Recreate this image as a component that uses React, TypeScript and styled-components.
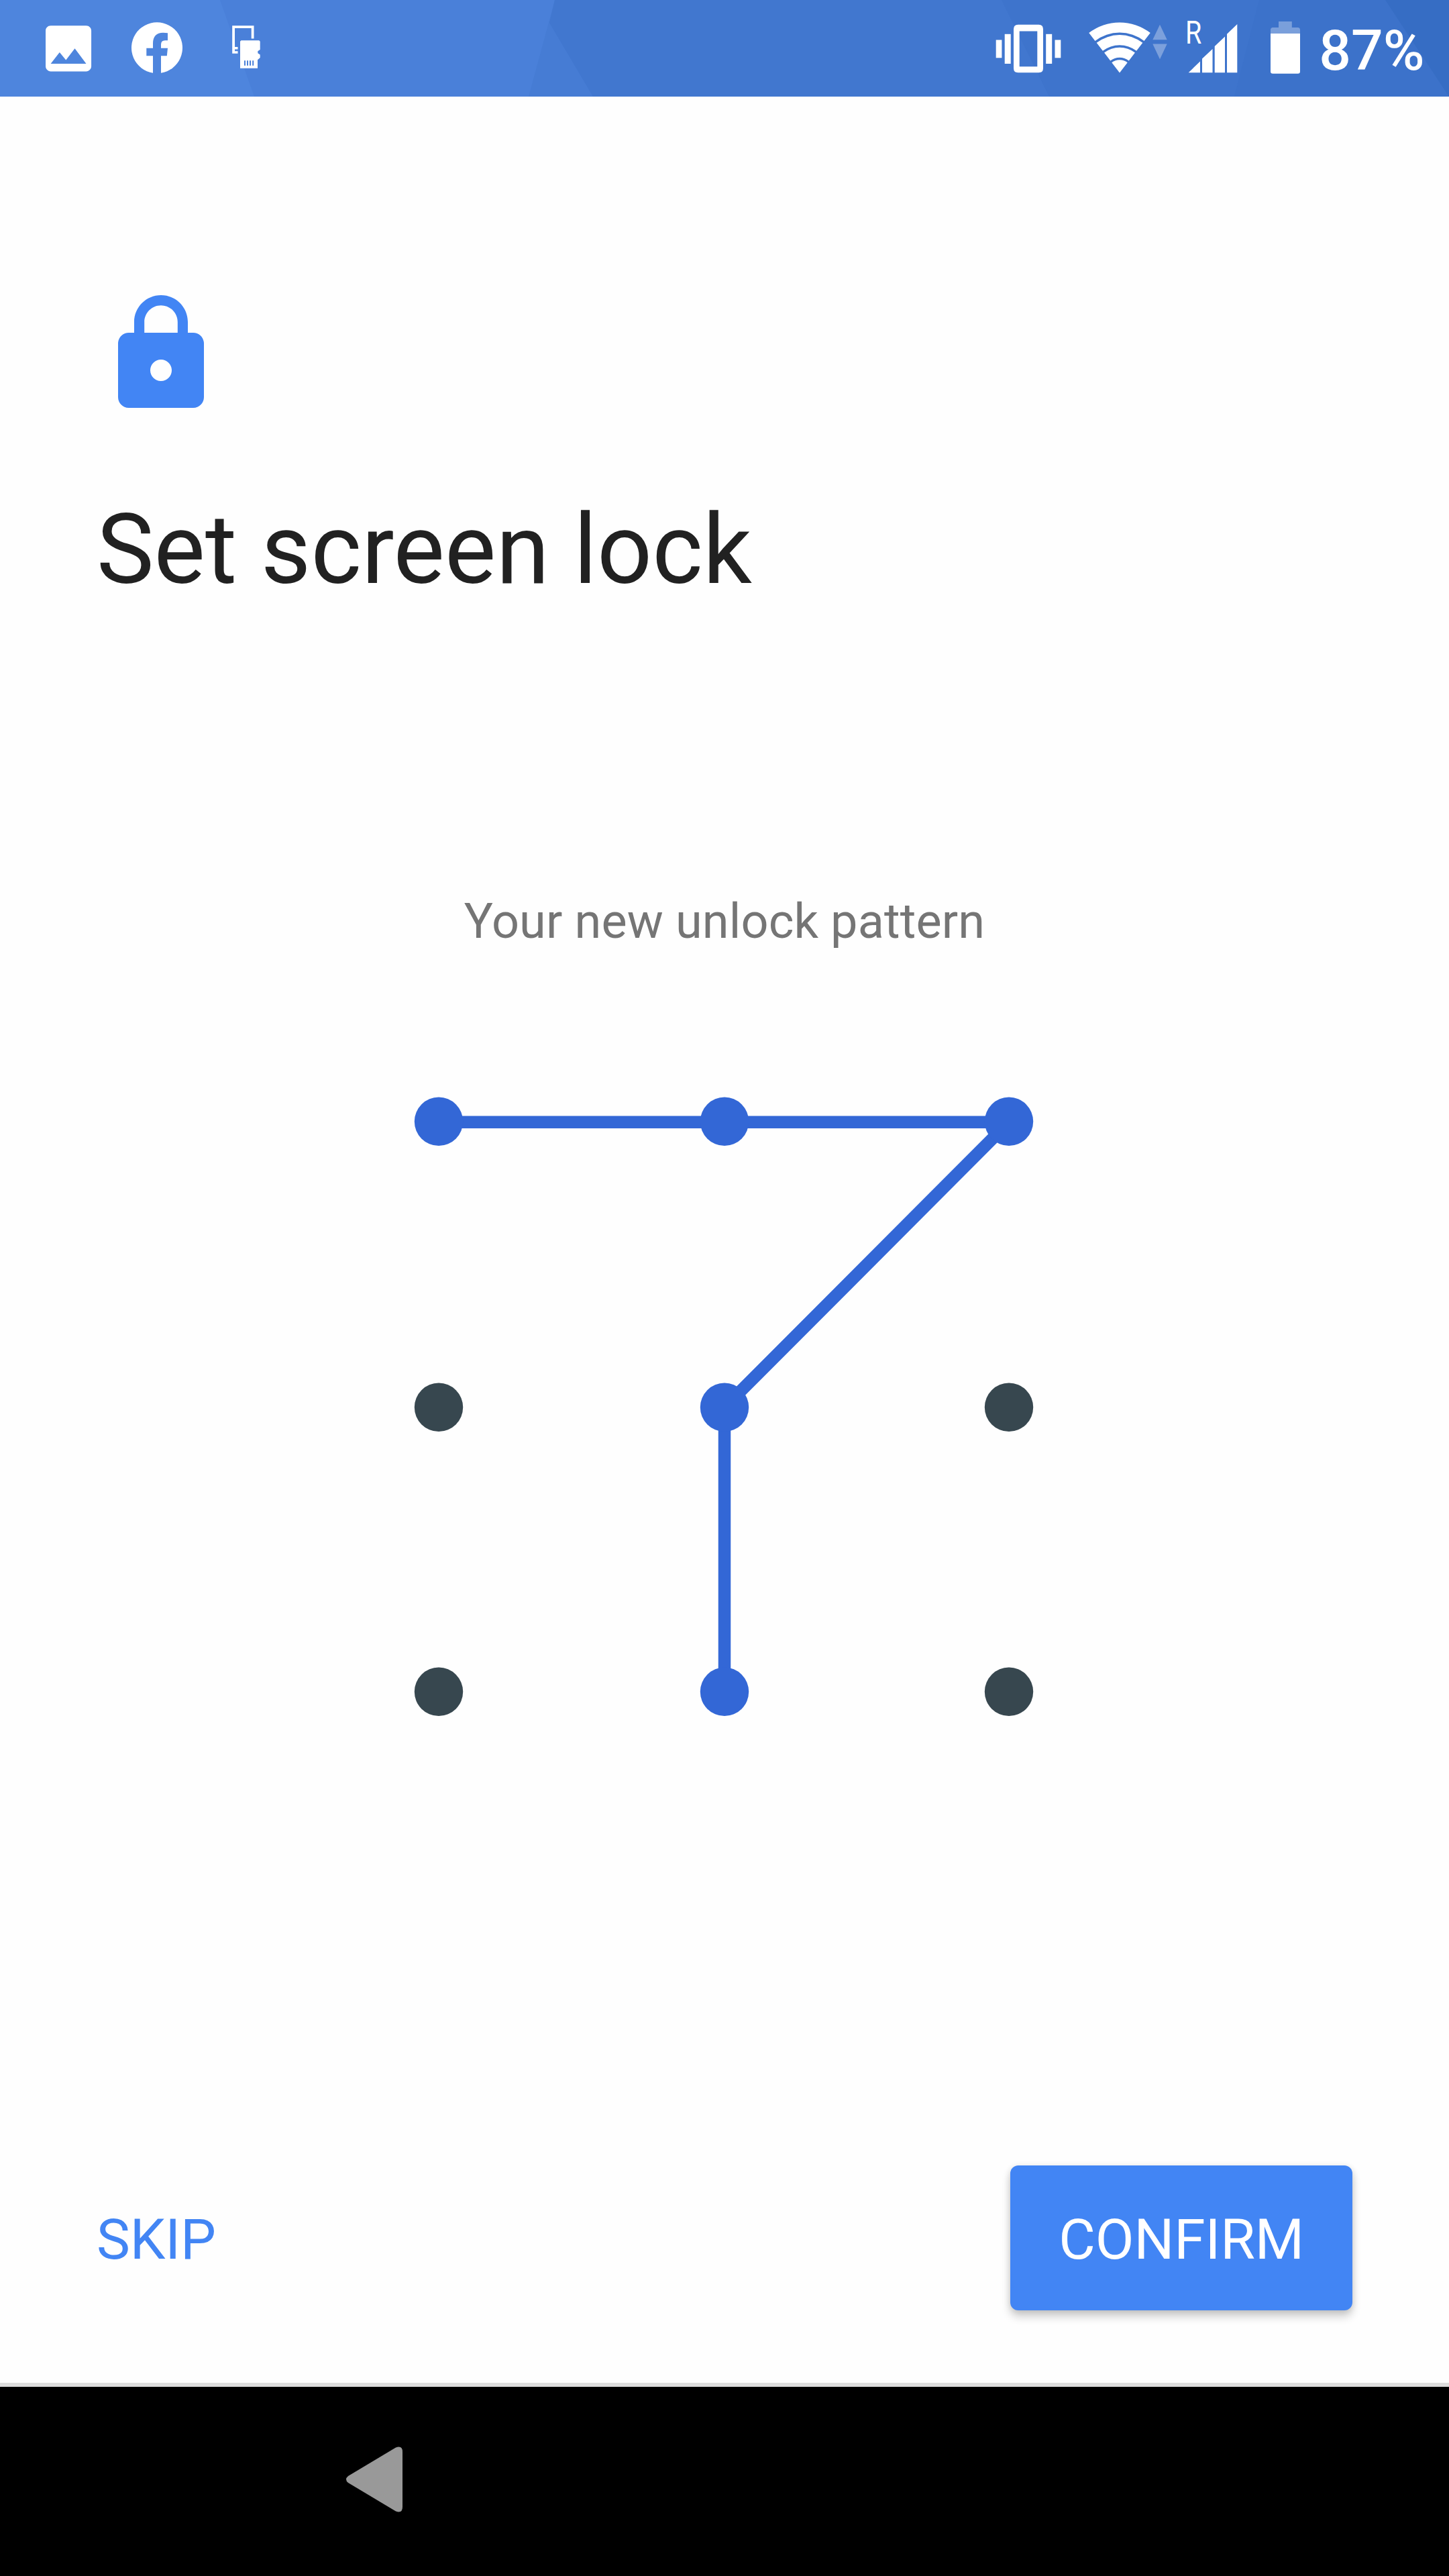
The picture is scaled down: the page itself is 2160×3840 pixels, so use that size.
import React from 'react';
import styled, { createGlobalStyle } from 'styled-components';

const GlobalStyle = createGlobalStyle`
  body { margin: 0; background: #fefefe; }
  *, *::before, *::after { box-sizing: border-box; }
`;

const Screen = styled.div`
  display: flex;
  flex-direction: column;
  width: 2160px;
  height: 3840px;
  background: #fefefe;
  font-family: Roboto, 'Noto Sans', sans-serif;
  overflow: hidden;
`;

const StatusBar = styled.header`
  position: relative;
  flex: none;
  display: flex;
  justify-content: space-between;
  height: 144px;
  padding: 0 36.500px 0 56px;
  color: #fff;
`;

const Backdrop = styled.svg`
  position: absolute;
  inset: 0;
  width: 2160px;
  height: 144px;
`;

const StatusGroup = styled.div`
  position: relative;
  display: flex;
  align-items: flex-start;
`;

const Glyph = styled.svg<{ $gap?: number }>`
  flex: none;
  display: block;
  height: 144px;
  margin-left: ${({ $gap = 0 }) => $gap}px;
  fill: #fff;
`;

const Roaming = styled.span`
  width: 22px;
  margin: 21px -20px 0 26px;
  font-size: 48px;
  line-height: 56px;
  transform: scaleX(0.82);
  transform-origin: left center;
`;

const BatteryLevel = styled.span`
  margin: 27px 0 0 28px;
  font-size: 84px;
  font-weight: 500;
  line-height: 98px;
  white-space: nowrap;
`;

const Main = styled.main`
  flex: 1;
  display: flex;
  flex-direction: column;
  padding: 288px 144px 108px;
`;

const LockIcon = styled.svg`
  flex: none;
  width: 192px;
  height: 192px;
  fill: #4285f4;
`;

const Title = styled.h1`
  margin: 112px 0 0;
  font-size: 144px;
  font-weight: 400;
  line-height: 168px;
  letter-spacing: 0.1px;
  color: #212121;
`;

const Hint = styled.p`
  margin: 428px 0 0;
  font-size: 72px;
  line-height: 84px;
  letter-spacing: 0.15px;
  text-align: center;
  color: #757575;
`;

const Pattern = styled.svg`
  flex: none;
  align-self: center;
  width: 936px;
  height: 936px;
  margin-top: 214px;
`;

const Actions = styled.footer`
  display: flex;
  justify-content: space-between;
  align-items: center;
  height: 216px;
  margin-top: auto;
`;

const Button = styled.button<{ $raised?: boolean }>`
  height: 216px;
  padding: ${({ $raised }) => ($raised ? '6px 72px 0' : '6px 0 0')};
  border: 0;
  border-radius: 12px;
  background: ${({ $raised }) => ($raised ? '#4285f4' : 'transparent')};
  box-shadow: ${({ $raised }) =>
    $raised ? '0 9px 14px rgba(0,0,0,.2), 0 1px 10px rgba(0,0,0,.1)' : 'none'};
  color: ${({ $raised }) => ($raised ? '#fff' : '#4285f4')};
  font: 400 84px/98px Roboto, 'Noto Sans', sans-serif;
  letter-spacing: -0.15px;
`;

const NavBar = styled.nav`
  flex: none;
  display: flex;
  align-items: center;
  height: 288px;
  padding-left: 516px;
  border-top: 6px solid #ddd;
  background: #000;
  svg { margin-top: -7px; }
`;

type GlyphProps = { x: number; w: number; gap?: number; children: React.ReactNode };

const StatusGlyph = ({ x, w, gap, children }: GlyphProps) => (
  <Glyph $gap={gap} width={w} viewBox={`${x} 0 ${w} 144`}>
    {children}
  </Glyph>
);

/* Ring section of the Wi-Fi fan, its apex at (1669, 108.4). */
const wifiBand = (outer: number, inner: number) => {
  const ux = 0.61;
  const uy = 0.792;
  const px = (r: number, s: number) => `${(1669 + s * ux * r).toFixed(2)} ${(108.4 - uy * r).toFixed(2)}`;
  return `M${px(outer, -1)}A${outer} ${outer} 0 0 1 ${px(outer, 1)}L${px(inner, 1)}${
    inner ? `A${inner} ${inner} 0 0 0 ${px(inner, -1)}` : ''
  }Z`;
};

const columns = [42, 468, 892];
const rows = [41.8, 467.8, 891.8];
const picked = [0, 1, 2, 4, 7];

const PatternGrid = () => (
  <Pattern viewBox="0 0 936 936">
    <path d="M42 42.7H892L468 467.8V891.8" fill="none" stroke="#3367d6" strokeWidth="18.5" strokeLinejoin="round" />
    {rows.flatMap((cy, r) =>
      columns.map((cx, c) => {
        const index = r * 3 + c;
        return <circle key={index} cx={cx} cy={cy} r="36.200" fill={picked.includes(index) ? '#3367d6' : '#37474f'} />;
      }),
    )}
  </Pattern>
);

export default function App() {
  return (
    <Screen>
      <GlobalStyle />
      <StatusBar>
        <Backdrop viewBox="0 0 2160 144">
          <path d="M0 0H2160V144H0Z" fill="#4e85dd" />
          <path d="M328 0H2160V144H379Z" fill="#4a80d9" />
          <path d="M827 0H2160V144H788Z" fill="#467cd4" />
          <path d="M827 0H2160V144H884L819 34Z" fill="#4177cf" />
          <path d="M1493 0H2160V144H1564Z" fill="#3e74cc" />
          <path d="M1877 0H2160V144H1840Z" fill="#3c72ca" />
          <path d="M2065 0H2160V144Z" fill="#366dc4" />
        </Backdrop>
        <StatusGroup>
          <StatusGlyph x={56} w={92}>
            <path
              transform="translate(56.7 27) scale(3.78)"
              d="M21 19V5c0-1.1-.9-2-2-2H5c-1.1 0-2 .9-2 2v14c0 1.1.9 2 2 2h14c1.1 0 2-.9 2-2zM8.5 13.5l2.5 3.01L14.5 12l4.5 6H5l3.5-4.5z"
            />
          </StatusGlyph>
          <StatusGlyph x={196} w={76} gap={48}>
            <path d="M228 108.8A38 38 0 1 1 240 108.8V83.3H248.8L250 71.7H240V66.5Q240 60.2 246 60.2H250V49.3Q247 48.8 243 48.8C233.500 48.8 228 54.500 228 64.500V71.7H218.300V83.3H228Z" />
          </StatusGlyph>
          <StatusGlyph x={346} w={42} gap={74}>
            <path d="M346.200 38.200H378.500V57.500H374.700V42H350V70H354.500V73.500H350V76.300H354.500V79.800H346.200Z" />
            <path
              fillRule="evenodd"
              d="M359.500 60.300H386.200L387.700 61.800V74L384.300 76.200V79.200L387.700 81.500V86L384 89.300V101.800H358V61.800ZM364 90.300V97.800H366V90.300ZM368 90.300V97.800H370V90.300ZM372 90.300V97.800H374V90.300ZM376.200 90.300V97.800H378.200V90.300Z"
            />
          </StatusGlyph>
        </StatusGroup>
        <StatusGroup>
          <StatusGlyph x={1484} w={98}>
            <rect x="1484.700" y="59.500" width="8.700" height="26.800" />
            <rect x="1497.700" y="50.800" width="9" height="44.200" />
            <rect x="1559.200" y="50.800" width="9" height="44.200" />
            <rect x="1572.500" y="59.500" width="8.800" height="26.800" />
            <path
              fillRule="evenodd"
              d="M1517.500 36.800H1548.500Q1555 36.800 1555 43.300V101.700Q1555 108.200 1548.500 108.200H1517.500Q1511 108.200 1511 101.700V43.300Q1511 36.800 1517.500 36.800ZM1519.700 46.500V99.200H1546.300V46.500Z"
            />
          </StatusGlyph>
          <StatusGlyph x={1623} w={118} gap={41}>
            <path d={wifiBand(75, 59.9)} />
            <path d={wifiBand(56.3, 41.2)} />
            <path d={wifiBand(37.6, 22.6)} />
            <path d={wifiBand(19.2, 0)} />
            <path opacity=".32" d="M1718.300 59.300L1729 36.700L1739.700 59.300ZM1718.300 65.500H1739.700L1729 88.200Z" />
          </StatusGlyph>
          <Roaming>R</Roaming>
          <StatusGlyph x={1771} w={74} gap={2}>
            <path d="M1771.700 108.200L1789 91.500V108.200ZM1792 108.200V87.500L1807.500 73V108.200ZM1810.700 108.200V69L1826 54.500V108.200ZM1829 108.200V50.700L1844.300 36V108.200Z" />
          </StatusGlyph>
          <StatusGlyph x={1894} w={44} gap={49}>
            <path opacity=".32" d="M1894 50V44.500Q1894 41 1897.500 41H1906V32H1925.800V41H1934.500Q1938 41 1938 44.500V50Z" />
            <path d="M1894 50H1938V106.500Q1938 109.800 1934.700 109.800H1897.300Q1894 109.800 1894 106.500Z" />
          </StatusGlyph>
          <BatteryLevel>87%</BatteryLevel>
        </StatusGroup>
      </StatusBar>

      <Main>
        <LockIcon viewBox="0 0 24 24">
          <path d="M18 8h-1V6c0-2.760-2.240-5-5-5S7 3.240 7 6v2H6c-1.100 0-2 .9-2 2v10c0 1.100.9 2 2 2h12c1.100 0 2-.9 2-2V10c0-1.100-.9-2-2-2zm-6 9c-1.100 0-2-.9-2-2s.9-2 2-2 2 .9 2 2-.9 2-2 2zm3.100-9H8.900V6c0-1.710 1.390-3.100 3.100-3.100 1.710 0 3.100 1.390 3.100 3.100v2z" />
        </LockIcon>
        <Title>Set screen lock</Title>
        <Hint>Your new unlock pattern</Hint>
        <PatternGrid />
        <Actions>
          <Button>SKIP</Button>
          <Button $raised>CONFIRM</Button>
        </Actions>
      </Main>

      <NavBar>
        <svg width="84" height="98" viewBox="0 0 84 98">
          <path d="M3 44L74 1.500Q84 -2 84 8V90Q84 100 74 96.500L3 54Q-3 49 3 44Z" fill="#999" />
        </svg>
      </NavBar>
    </Screen>
  );
}
